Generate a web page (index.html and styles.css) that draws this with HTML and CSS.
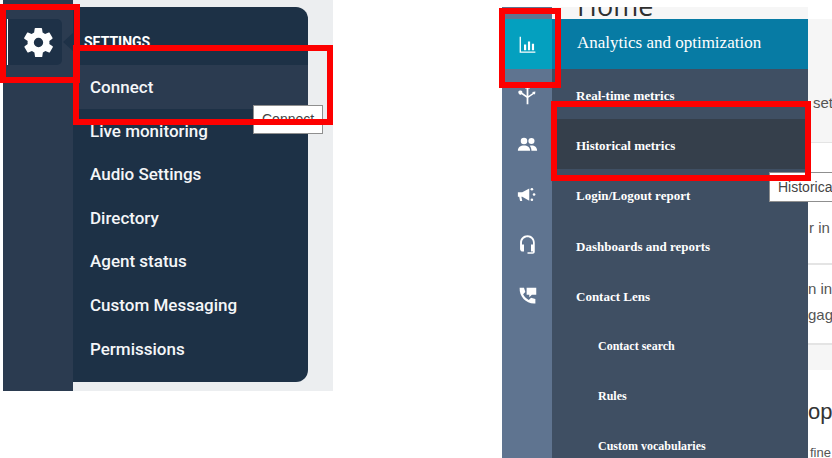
FILE: index.html
```html
<!DOCTYPE html>
<html lang="en">
<head>
    <meta charset="UTF-8">
    <meta name="viewport" content="width=device-width, initial-scale=1.0">
    <title>Navigation menus</title>
    <link rel="stylesheet" href="styles.css">
</head>
<body>

    <div class="canvas">
        <!-- first capture: settings menu -->
        <div class="shot-a">
            <div class="rail-a">
                <div class="gear-tab">
                    <svg class="gear" viewBox="0 0 24 24"><path d="M19.400 13c.1-.3.1-.7.1-1s0-.7-.1-1l2.100-1.600c.2-.2.2-.4.1-.6l-2-3.500c-.1-.2-.4-.3-.6-.2l-2.500 1c-.5-.4-1.100-.7-1.700-1l-.4-2.700c0-.2-.2-.4-.5-.4h-4c-.3 0-.5.2-.5.4l-.4 2.700c-.6.3-1.200.6-1.700 1l-2.500-1c-.2-.1-.5 0-.6.2l-2 3.500c-.1.2-.1.4.1.6L4.600 11c-.1.3-.1.7-.1 1s0 .7.1 1l-2.100 1.600c-.2.2-.2.4-.1.6l2 3.500c.1.2.4.3.6.2l2.500-1c.5.4 1.100.7 1.700 1l.4 2.700c0 .2.2.4.5.4h4c.3 0 .5-.2.5-.4l.4-2.700c.6-.3 1.200-.6 1.700-1l2.500 1c.2.1.5 0 .6-.2l2-3.500c.1-.2.1-.4-.1-.6zM12 15.200a3.200 3.200 0 1 1 0-6.400 3.200 3.200 0 0 1 0 6.400z"/></svg>
                </div>
                <span class="tab-notch"></span>
            </div>
            <div class="panel-a">
                <div class="panel-a-title">SETTINGS</div>
                <div class="item-a item-a-active">Connect</div>
                <div class="item-a">Live monitoring</div>
                <div class="item-a">Audio Settings</div>
                <div class="item-a">Directory</div>
                <div class="item-a">Agent status</div>
                <div class="item-a">Custom Messaging</div>
                <div class="item-a">Permissions</div>
            </div>
        </div>

        <!-- second capture: analytics menu -->
        <div class="shot-b">
            <div class="rail-b">
                <div class="rail-b-icon rail-b-active">
                    <svg viewBox="0 0 24 24"><path d="M3 3h1.500v17H21v1.500H3zM8 12h2.500v6.500H8zM12.500 8.500H15v10h-2.500zM17 11h2.500v7.500H17z"/></svg>
                </div>
                <div class="rail-b-icon">
                    <svg viewBox="0 0 24 24"><path d="M12 1l3 4h-2v8.600l5-3.300-.6-1.200 3.600-.6-.4 3.600-1.300-.6-6.300 4.200V23h-2v-7.300L5.200 11.600a2.300 2.300 0 1 1 1-1.700l4.800 3.400V5H9z"/></svg>
                </div>
                <div class="rail-b-icon">
                    <svg viewBox="0 0 24 24"><circle cx="8" cy="8" r="3.700"/><circle cx="16.500" cy="8" r="3.500"/><path d="M1 19c0-4 3-6 7-6s7 2 7 6zM16.500 19c0-2.300-.6-4.200-2-5.700 4.500-1 8.500 1 8.500 5.700z"/></svg>
                </div>
                <div class="rail-b-icon">
                    <svg viewBox="0 0 24 24"><path d="M1 9.500h5L14 5v14l-8-4.500H5l1 5H3.500l-1-5H1z"/><circle cx="17" cy="6" r="1.500"/><circle cx="19.500" cy="12" r="1.500"/><circle cx="17" cy="18" r="1.500"/></svg>
                </div>
                <div class="rail-b-icon">
                    <svg viewBox="0 0 24 24"><path d="M12 1.500c-5 0-8.500 3.700-8.500 8.500v7c0 1.700 1.300 3 3 3H8v-8H5.700v-2c0-3.700 2.800-6.400 6.300-6.400s6.300 2.700 6.300 6.400v2H16v8h2.300v.8H12v1.700h6c1.300 0 2.300-1 2.300-2.300V10c0-4.800-3.300-8.500-8.300-8.500z"/></svg>
                </div>
                <div class="rail-b-icon">
                    <svg viewBox="0 0 24 24"><path d="M3 3h5l1.500 5-2.500 2.500c1.300 2.700 3.500 4.900 6.500 6.500l2.500-2.500 5 1.500v5c-10 1-18.500-7.500-18-18zM11 3h11v8h-5l-3 3v-3h-3z"/></svg>
                </div>
            </div>
            <div class="middle-b">
                <div class="home-strip"><span class="home-title">Home</span></div>
                <div class="panel-b">
                    <div class="panel-b-head">Analytics and optimization</div>
                    <div class="item-b">Real-time metrics</div>
                    <div class="item-b item-b-active">Historical metrics</div>
                    <div class="item-b">Login/Logout report</div>
                    <div class="item-b">Dashboards and reports</div>
                    <div class="item-b">Contact Lens</div>
                    <div class="item-b item-b-sub">Contact search</div>
                    <div class="item-b item-b-sub">Rules</div>
                    <div class="item-b item-b-sub">Custom vocabularies</div>
                </div>
            </div>
            <div class="behind-b">
                <div class="behind-top"><span class="frag frag-set">set</span></div>
                <div class="behind-card">
                    <span class="frag frag-rin">r in</span>
                    <span class="frag frag-nin">n in</span>
                    <span class="frag frag-gage">gage</span>
                </div>
                <div class="behind-gap"></div>
                <div class="behind-bottom">
                    <span class="frag-ope">ope</span>
                    <span class="frag frag-fine">fine</span>
                </div>
            </div>
        </div>

        <div class="tip tip-a">Connect</div>
        <div class="tip tip-b">Historical metrics</div>

        <div class="mark mark-1"></div>
        <div class="mark mark-2"></div>
        <div class="mark mark-3"></div>
        <div class="mark mark-4"></div>
    </div>

</body>
</html>
```

FILE: styles.css
```css
body {
    margin: 0;
    background: #fff;
}
.canvas {
    position: relative;
    display: flex;
    width: 832px;
    height: 458px;
    overflow: hidden;
    background: #fff;
}

/* settings capture */
.shot-a {
    display: flex;
    flex: none;
    width: 330px;
    height: 391px;
    margin-left: 3px;
    background: #eceef0;
    font-family: Roboto, "Noto Sans", sans-serif;
}
.rail-a {
    position: relative;
    flex: none;
    width: 70px;
    padding-top: 19px;
    background: #2b3b50;
    box-sizing: border-box;
}
.gear-tab {
    display: flex;
    align-items: center;
    justify-content: center;
    width: 55px;
    height: 46px;
    margin-left: 4px;
    padding-left: 7px;
    background: #1e3147;
    border-left: 1px solid #fff;
    border-radius: 0 5px 5px 0;
    box-sizing: border-box;
}
.gear {
    width: 35px;
    height: 35px;
    fill: #fff;
}
.tab-notch {
    position: absolute;
    top: 33px;
    right: 0;
    border-top: 9px solid transparent;
    border-bottom: 9px solid transparent;
    border-right: 10px solid #1e3147;
}
.panel-a {
    flex: none;
    width: 235px;
    height: 375px;
    margin-top: 7px;
    padding-top: 25px;
    background: #1d3146;
    border-radius: 0 12px 12px 0;
    box-sizing: border-box;
}
.panel-a-title {
    height: 33px;
    padding-left: 11px;
    color: #fff;
    font-size: 14px;
    font-weight: 700;
    line-height: 21px;
}
.item-a {
    height: 43.600px;
    padding-left: 17px;
    color: #f4f6f8;
    font-size: 17px;
    font-weight: 500;
    line-height: 44px;
}
.item-a-active {
    background: #2b3b50;
}

/* analytics capture */
.shot-b {
    display: flex;
    flex: none;
    width: 330px;
    height: 458px;
    margin-left: 169px;
    padding-top: 7px;
    box-sizing: border-box;
}
.rail-b {
    flex: none;
    width: 50px;
    padding-top: 12px;
    background: #5f7490;
    box-sizing: border-box;
}
.rail-b-icon {
    display: flex;
    align-items: center;
    justify-content: center;
    height: 50.200px;
}
.rail-b-icon svg {
    width: 21px;
    height: 21px;
    fill: #fff;
}
.rail-b-active {
    background: #04a0bf;
}
.middle-b {
    flex: none;
    width: 256px;
}
.home-strip {
    height: 12px;
    overflow: hidden;
    background: #f6f6f6;
}
.home-title {
    display: block;
    margin: -21px 0 0 25px;
    color: #2f2f2f;
    font-family: "Open Sans", sans-serif;
    font-size: 27px;
    line-height: 40px;
}
.panel-b {
    height: 439px;
    overflow: hidden;
    background: #3f4f63;
    font-family: "Liberation Serif", serif;
}
.panel-b-head {
    height: 50px;
    padding-left: 25px;
    background: #077ba4;
    color: #fff;
    font-size: 17px;
    line-height: 48px;
}
.item-b {
    height: 50.200px;
    padding-left: 24px;
    color: #fff;
    font-size: 13px;
    font-weight: 700;
    line-height: 53px;
}
.item-b-active {
    background: #353f4b;
}
.item-b-sub {
    padding-left: 46px;
    font-size: 12px;
}
.behind-b {
    flex: 1;
    min-width: 0;
    margin-top: 12px;
    overflow: hidden;
    font-family: "Liberation Sans", sans-serif;
    color: #555;
    font-size: 15px;
}
.behind-top {
    height: 123px;
    overflow: hidden;
    background: #f6f6f6;
}
.behind-card {
    height: 203px;
    overflow: hidden;
    border-top: 1px solid #e4e4e4;
    border-bottom: 2px solid #e4e4e4;
    box-sizing: border-box;
}
.behind-gap {
    height: 25px;
    background: #f6f6f6;
}
.frag {
    display: block;
    white-space: nowrap;
}
.frag-set {
    padding: 75px 0 0 5px;
}
.frag-rin {
    padding: 76px 0 0 1px;
    line-height: 18px;
}
.frag-nin {
    margin-top: 26px;
    padding-top: 15px;
    border-top: 2px solid #e4e4e4;
    line-height: 18px;
}
.frag-gage {
    padding-top: 8px;
    line-height: 18px;
}
.frag-ope {
    display: block;
    padding-top: 29px;
    color: #333;
    font-size: 22px;
    line-height: 26px;
}
.frag-fine {
    padding: 20px 0 0 2px;
    font-size: 13px;
    line-height: 16px;
}

/* tooltips and red annotation frames sit over both captures */
.tip {
    position: absolute;
    padding: 0 8px;
    overflow: hidden;
    background: #fff;
    border: 1px solid #8f8f8f;
    box-sizing: border-box;
    color: #444;
    font-family: "Liberation Sans", sans-serif;
    font-size: 14px;
    white-space: nowrap;
}
.tip-a {
    top: 105px;
    left: 253px;
    width: 70px;
    height: 29px;
    line-height: 27px;
}
.tip-b {
    top: 172px;
    left: 769px;
    width: 90px;
    height: 30px;
    line-height: 28px;
}
.mark {
    position: absolute;
    border: 6px solid #fd0000;
    box-sizing: border-box;
}
.mark-1 {
    top: 4px;
    left: 0;
    width: 80px;
    height: 79px;
}
.mark-2 {
    top: 45px;
    left: 73px;
    width: 260px;
    height: 80px;
}
.mark-3 {
    top: 8px;
    left: 499px;
    width: 62px;
    height: 80px;
}
.mark-4 {
    top: 101px;
    left: 551px;
    width: 260px;
    height: 80px;
}
```
